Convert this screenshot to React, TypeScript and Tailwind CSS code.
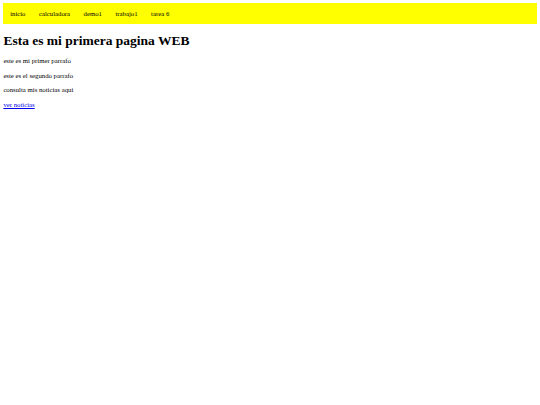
const links = ["inicio", "calculadora", "demo1", "trabajo1", "tarea 6"]

export default function App() {
  return (
    <div className="min-h-screen bg-white p-[3.375px] text-black [font-family:'Liberation_Serif','Times_New_Roman',serif]">
      <nav className="bg-[#ffff00]">
        <ul className="flex">
          {links.map((l) => (
            <li key={l} className="px-[6.75px] py-[6.4px] text-[6.75px] leading-[1.15]">
              <a href="#" className="text-black">{l}</a>
            </li>
          ))}
        </ul>
      </nav>
      <h1 className="my-[9px] text-[13.5px] font-bold leading-[1.15]">Esta es mi primera pagina WEB</h1>
      <p className="my-[6.75px] text-[6.75px] leading-[1.15]">este es mi primer parrafo</p>
      <p className="my-[6.75px] text-[6.75px] leading-[1.15]">este es el segundo parrafo</p>
      <p className="my-[6.75px] text-[6.75px] leading-[1.15]">consulta mis noticias aqui</p>
      <p className="my-[6.75px] text-[6.75px] leading-[1.15]">
        <a href="#" className="text-[#0000ee] underline">ver noticias</a>
      </p>
    </div>
  )
}
